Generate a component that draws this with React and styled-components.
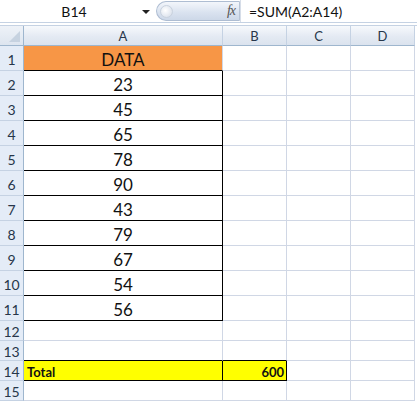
import React from "react";
import styled, { createGlobalStyle } from "styled-components";

const Global = createGlobalStyle`
  html, body { margin: 0; padding: 0; background: #ffffff; }
  body { font-family: Lato, "Liberation Sans", sans-serif; }
`;

const Page = styled.div`
  width: 417px;
  height: 402px;
  overflow: hidden;
  background: #ffffff;
  display: flex;
  flex-direction: column;
`;

const FormulaBar = styled.div`
  height: 22px;
  display: flex;
  align-items: stretch;
  border-bottom: 1px solid #c5d2e3;
  background: #ffffff;
`;

const NameBox = styled.div`
  width: 156px;
  display: flex;
  align-items: center;
  font-family: Lato, "Liberation Sans", Arial, sans-serif;
  font-size: 14px;
  color: #111;
`;

const NameText = styled.span`
  flex: 1;
  text-align: center;
  padding-left: 6px;
`;

const Arrow = styled.span`
  width: 0;
  height: 0;
  border-left: 4px solid transparent;
  border-right: 4px solid transparent;
  border-top: 4px solid #222;
  margin-right: 6px;
  margin-top: 1px;
`;

const Capsule = styled.div`
  width: 84px;
  margin-top: 1px;
  height: 20px;
  border-radius: 11px 0 0 11px;
  background: linear-gradient(#f3f6fb, #d9e2ef 60%, #cdd8e8);
  border: 1px solid #aebdd2;
  border-right: 1px solid #b7c4d6;
  display: flex;
  align-items: center;
  justify-content: space-between;
  box-sizing: border-box;
  padding: 0 4px 0 3px;
`;

const Knob = styled.span`
  width: 11px;
  height: 11px;
  border-radius: 50%;
  background: radial-gradient(circle at 40% 40%, #ffffff, #dfe5ee 70%, #c6cfdc);
  border: 1px solid #c9d2de;
`;

const Fx = styled.span`
  font-family: "Liberation Serif", serif;
  font-style: italic;
  font-size: 14px;
  color: #555;
  letter-spacing: -1px;
`;

const Formula = styled.div`
  flex: 1;
  display: flex;
  align-items: center;
  padding-left: 8px;
  font-family: Lato, "Liberation Sans", Arial, sans-serif;
  font-size: 14px;
  color: #111;
  border-left: 1px solid #d6dde8;
`;

const Gap = styled.div`
  height: 2px;
  background: #ffffff;
  border-bottom: 1px solid #c5d2e3;
`;

const Sheet = styled.div`
  display: grid;
  grid-template-columns: 24px 199px 64px 64px 64px;
  grid-template-rows: 20px repeat(11, 25px) repeat(4, 20px);
`;

const Corner = styled.div`
  background: linear-gradient(#eef2f8, #dde5ef);
  border-right: 1px solid #9eb6ce;
  border-bottom: 1px solid #9eb6ce;
  position: relative;
  box-sizing: border-box;
  &::after {
    content: "";
    position: absolute;
    right: 3px;
    bottom: 3px;
    width: 0;
    height: 0;
    border-left: 11px solid transparent;
    border-bottom: 11px solid #c6d2e0;
  }
`;

const ColHead = styled.div`
  box-sizing: border-box;
  background: linear-gradient(#f7f9fc, #e4eaf3 55%, #dbe3ee);
  border-right: 1px solid #c5d2e3;
  border-bottom: 1px solid #9eb6ce;
  display: flex;
  align-items: center;
  justify-content: center;
  font-family: Lato, "Liberation Sans", Arial, sans-serif;
  font-size: 13px;
  color: #27364a;
`;

const RowHead = styled.div`
  box-sizing: border-box;
  background: #e4ecf7;
  border-right: 1px solid #9eb6ce;
  border-bottom: 1px solid #c5d2e3;
  display: flex;
  align-items: center;
  justify-content: center;
  font-family: Lato, "Liberation Sans", Arial, sans-serif;
  font-size: 14px;
  color: #27364a;
  padding-top: 2px;
`;

const Cell = styled.div`
  box-sizing: border-box;
  background: ${(p) => p.$bg || "#ffffff"};
  border-right: 1px solid ${(p) => (p.$rb ? "#000" : "#d0d7e5")};
  border-bottom: 1px solid ${(p) => (p.$bb ? "#000" : "#d0d7e5")};
  display: flex;
  align-items: center;
  justify-content: ${(p) => p.$align || "center"};
  padding: ${(p) => (p.$small ? "2px 2px 0 3px" : "3px 0 0 0")};
  font-family: Lato, "Liberation Sans", sans-serif;
  font-size: ${(p) => (p.$small ? "13px" : "17px")};
  font-weight: ${(p) => (p.$bold ? 700 : 400)};
  color: #111;
`;

const values = [23, 45, 65, 78, 90, 43, 79, 67, 54, 56];
const cols = ["A", "B", "C", "D"];

function cellProps(row, col) {
  const p = {};
  if (col === 0 && row >= 1 && row <= 11) p.$bb = true;
  if (col === 0 && row >= 2 && row <= 11) p.$rb = true;
  if (row === 13 && (col === 0 || col === 1)) p.$bb = true;
  if (row === 14 && (col === 0 || col === 1)) {
    p.$bb = true;
    p.$rb = true;
    p.$bg = "#ffff00";
    p.$small = true;
    p.$bold = true;
  }
  if (row === 1 && col === 0) p.$bg = "#f79646";
  return p;
}

function content(row, col) {
  if (col === 0 && row === 1) return "DATA";
  if (col === 0 && row >= 2 && row <= 11) return values[row - 2];
  if (row === 14 && col === 0) return "Total";
  if (row === 14 && col === 1) return "600";
  return "";
}

export default function App() {
  const rows = [];
  for (let r = 1; r <= 15; r++) {
    rows.push(<RowHead key={`h${r}`}>{r}</RowHead>);
    cols.forEach((c, ci) => {
      const p = cellProps(r, ci);
      let align = "center";
      if (r === 14 && ci === 0) align = "flex-start";
      if (r === 14 && ci === 1) align = "flex-end";
      rows.push(
        <Cell key={`${c}${r}`} {...p} $align={align}>
          {content(r, ci)}
        </Cell>
      );
    });
  }
  return (
    <Page>
      <Global />
      <FormulaBar>
        <NameBox>
          <NameText>B14</NameText>
          <Arrow />
        </NameBox>
        <Capsule>
          <Knob />
          <Fx>fx</Fx>
        </Capsule>
        <Formula>=SUM(A2:A14)</Formula>
      </FormulaBar>
      <Gap />
      <Sheet>
        <Corner />
        {cols.map((c) => (
          <ColHead key={c}>{c}</ColHead>
        ))}
        {rows}
      </Sheet>
    </Page>
  );
}
